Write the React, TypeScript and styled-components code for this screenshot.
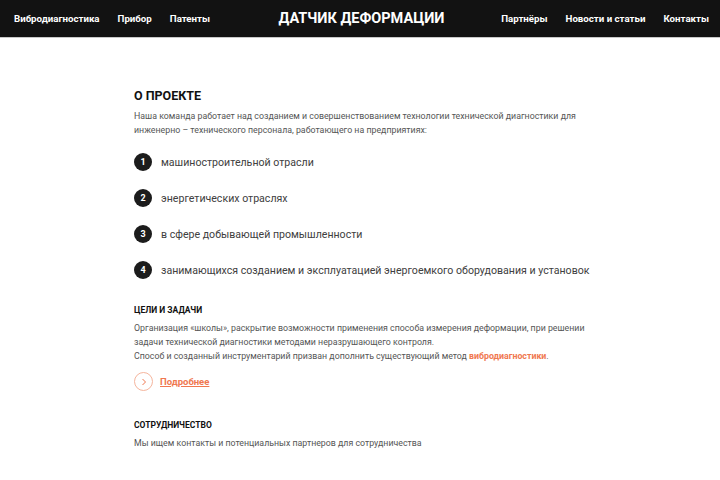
import styled, { createGlobalStyle } from 'styled-components';

const GlobalStyle = createGlobalStyle`
  body {
    margin: 0;
    background: #fff;
    font-family: Roboto, "Liberation Sans", Arial, sans-serif;
  }
`;

const Header = styled.header`
  height: 37px;
  background: #121212;
  border-bottom: 1px solid #c8c8c8;
  display: grid;
  grid-template-columns: 1fr auto 1fr;
  align-items: center;
  padding: 0 11px 0 14px;
`;

const Nav = styled.nav<{ $end?: boolean }>`
  display: flex;
  gap: 18px;
  justify-content: ${({ $end }) => ($end ? 'flex-end' : 'flex-start')};

  a {
    color: #fff;
    font-size: 9.7px;
    font-weight: 700;
    text-decoration: none;
  }
`;

const Logo = styled.div`
  color: #fff;
  font-size: 14.5px;
  font-weight: 700;
`;

const Main = styled.main`
  width: 452px;
  margin: 0 auto;
  padding-top: 50px;
`;

const Section = styled.section<{ $gap?: number }>`
  margin-bottom: ${({ $gap }) => $gap ?? 0}px;
`;

const Title = styled.h2<{ $size?: number }>`
  margin: 0 0 6px;
  font-size: ${({ $size }) => $size ?? 8.5}px;
  font-weight: 700;
  color: #111;
  text-transform: uppercase;
`;

const Text = styled.p`
  margin: 0;
  font-size: 8.8px;
  line-height: 14px;
  color: #555;
`;

const Accent = styled.a`
  color: #f07850;
  font-weight: 700;
  text-decoration: none;
`;

const Steps = styled.ol`
  list-style: none;
  margin: 16px 0 0;
  padding: 0;
  display: grid;
  gap: 18px;
`;

const Step = styled.li`
  display: flex;
  align-items: center;
  gap: 9px;
  font-size: 10.6px;
  color: #404040;
  white-space: nowrap;
`;

const Badge = styled.span`
  width: 18px;
  height: 18px;
  flex: none;
  border-radius: 50%;
  background: #1c1c1c;
  color: #fff;
  font-size: 9px;
  font-weight: 700;
  display: grid;
  place-items: center;
`;

const More = styled.a`
  margin-top: 9px;
  display: inline-flex;
  align-items: center;
  gap: 7px;
  color: #f07850;
  font-size: 9.5px;
  font-weight: 700;
  text-decoration: underline;
`;

const Ring = styled.span`
  width: 17px;
  height: 17px;
  border-radius: 50%;
  border: 1px solid #f5b59d;
  display: grid;
  place-items: center;
`;

const steps = [
  'машиностроительной отрасли',
  'энергетических отраслях',
  'в сфере добывающей промышленности',
  'занимающихся созданием и эксплуатацией энергоемкого оборудования и установок',
];

export default function App() {
  return (
    <>
      <GlobalStyle />
      <Header>
        <Nav>
          <a href="#">Вибродиагностика</a>
          <a href="#">Прибор</a>
          <a href="#">Патенты</a>
        </Nav>
        <Logo>ДАТЧИК ДЕФОРМАЦИИ</Logo>
        <Nav $end>
          <a href="#">Партнёры</a>
          <a href="#">Новости и статьи</a>
          <a href="#">Контакты</a>
        </Nav>
      </Header>
      <Main>
        <Section $gap={26}>
          <Title $size={12.5}>О проекте</Title>
          <Text>
            Наша команда работает над созданием и совершенствованием технологии технической диагностики для
            инженерно – технического персонала, работающего на предприятиях:
          </Text>
          <Steps>
            {steps.map((s, i) => (
              <Step key={s}>
                <Badge>{i + 1}</Badge>
                {s}
              </Step>
            ))}
          </Steps>
        </Section>
        <Section $gap={29}>
          <Title>Цели и задачи</Title>
          <Text>
            Организация «школы», раскрытие возможности применения способа измерения деформации, при решении
            задачи технической диагностики методами неразрушающего контроля.
            <br />
            Способ и созданный инструментарий призван дополнить существующий метод{' '}
            <Accent href="#">вибродиагностики</Accent>.
          </Text>
          <More href="#">
            <Ring>
              <svg width="6" height="8" viewBox="0 0 6 8" fill="none">
                <path d="M1.5 1l3 3-3 3" stroke="#f07850" strokeWidth="1" />
              </svg>
            </Ring>
            Подробнее
          </More>
        </Section>
        <Section>
          <Title>Сотрудничество</Title>
          <Text>Мы ищем контакты и потенциальных партнеров для сотрудничества</Text>
        </Section>
      </Main>
    </>
  );
}
